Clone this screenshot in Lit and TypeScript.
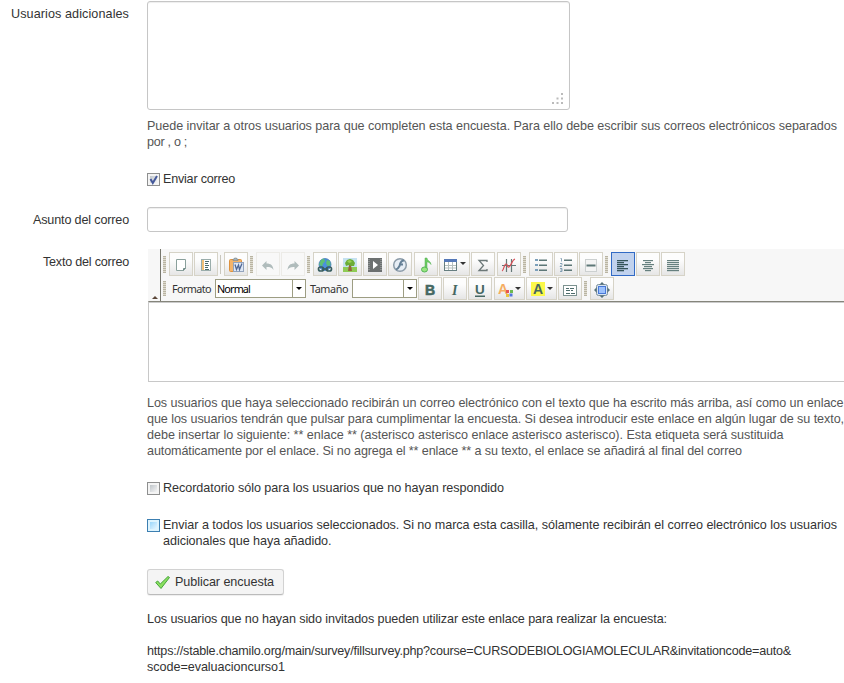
import { LitElement, html, svg, css, TemplateResult } from "lit";
import { customElement, property } from "lit/decorators.js";

const bars = (rows: number[][], color = "#4d6b6b", height = 1) =>
  rows.map(([x, y, w]) => svg`<rect x=${x} y=${y} width=${w} height=${height} fill=${color} />`);

const icons: Record<string, TemplateResult> = {
  page: svg`<path d="M3.500 2.500h9v9l-2 2h-7z" fill="#fff" stroke="#8aa09c"/><path d="M12.500 11.500h-2v2" fill="none" stroke="#6d8985"/>`,
  template: svg`<rect x="3.500" y="2.500" width="9" height="11" fill="#fff" stroke="#9aadab"/><path d="M5 3v10" stroke="#f2c078" stroke-width="2"/>${bars([[7, 4, 4], [7, 6, 3], [7, 8, 4], [7, 10, 3], [7, 12, 4]])}`,
  word: svg`<rect x="1.500" y="2.500" width="12" height="12" rx="1" fill="#f4b46a" stroke="#dd923f"/><path d="M5 3.500V2h1.500V1h2v1H10v1.500z" fill="#a9b6bd" stroke="#76858c" stroke-width=".6"/><rect x="5.500" y="5.500" width="10" height="9" fill="#dfe8f5" stroke="#93a4bd"/><path d="M7 7.500l1.500 5 2-4.500 1 4.500 2.500-6" fill="none" stroke="#4f6795" stroke-width="1.300"/>`,
  undo: svg`<path d="M2 8.500L6.500 4v2.500c4.500 0 6.500 2 7 6.500-1.500-2.200-3-3-7-3V13z" fill="#b0bcbc"/>`,
  redo: svg`<path d="M14 8.500L9.500 4v2.500c-4.500 0-6.500 2-7 6.500 1.500-2.200 3-3 7-3V13z" fill="#b0bcbc"/>`,
  link: svg`<circle cx="8" cy="7.500" r="6" fill="#4b90dc" stroke="#3973af" stroke-width=".7"/><path d="M4 3l3-1.500 1 3-2 2-1 3-3-2zM10 3l3 1 .5 4-3 1-1.500-3z" fill="#5fc073"/><g fill="none" stroke="#395e60" stroke-width="1.700"><rect x="1.500" y="10" width="5" height="4" rx="2"/><rect x="9.500" y="10" width="5" height="4" rx="2"/><path d="M5 12h6"/></g>`,
  image: svg`<rect x="1" y="1" width="14" height="9" fill="#c5e2f1"/><rect x="1" y="10" width="14" height="5" fill="#8fcb55"/><path d="M7 8h2l1 6H6z" fill="#94653a"/><path d="M3 6l2-3 3-1 3 1 2 3-1 3H9L7 8 4 9z" fill="#6bad35"/><path d="M5 4l3-1 2 2-3 1z" fill="#9ad153"/>`,
  video: svg`<rect x="1" y="1" width="14" height="14" fill="#6c7070"/><path d="M2 2v12M14 2v12" stroke="#aeb3b3" stroke-dasharray="1 1"/><path d="M6 4l5 4-5 4z" fill="#fff"/>`,
  flash: svg`<circle cx="8" cy="8" r="6.300" fill="#e6edf5" stroke="#8b9ba8" stroke-width="1.500"/><path d="M12 3.500C8 3.500 8 8 7.500 9S6 12 4 12.500M7 7.500h4" fill="none" stroke="#647f96" stroke-width="2"/>`,
  audio: svg`<path d="M7 1h2c0 3 4 3 4 6.500-1-2-3-2.500-4-2.500v7H7z" fill="#6ccc62" stroke="#55ae55" stroke-width=".5"/><ellipse cx="6.500" cy="12.500" rx="3" ry="2.500" fill="#98e580" stroke="#55b457"/>`,
  table: svg`<rect x="1.500" y="2.500" width="12" height="11" fill="#fff" stroke="#667e80"/><rect x="1" y="2" width="13" height="3" fill="#5478b8"/><path d="M2 8.500h11M2 11h11M5.500 5v8M9.500 5v8" stroke="#b5bfbe"/>`,
  sigma: svg`<path d="M12 5V3.500H4L8.500 8.500 4 13.500h8V12" fill="none" stroke="#6c7878" stroke-width="1.300"/>`,
  plot: svg`<path d="M1 8.500h14M5.500 2v13M10.500 2v13" stroke="#657878" stroke-width="1.200"/><path d="M1 14c2-1 2-7 4-7s1 4 3 3 3-7 6-8" fill="none" stroke="#d94d55" stroke-width="1.200"/>`,
  bullets: svg`<g fill="#7b9fba"><rect x="2" y="2" width="3" height="2"/><rect x="2" y="7" width="3" height="2"/><rect x="2" y="12" width="3" height="2"/></g>${bars([[6, 2.5, 8], [6, 7.5, 8], [6, 12.5, 8]], "#5d7777", 1.5)}`,
  numbers: svg`<path d="M2.500 1.500h1v3M2 6.500h2v1l-2 2h2M2 11.500h2v3H2M2.500 13h1.500" fill="none" stroke="#6f91a8" stroke-width=".8"/>${bars([[6, 2.5, 8], [6, 7.5, 8], [6, 12.5, 8]], "#5d7777", 1.5)}`,
  rule: svg`<rect x="2.500" y="2.500" width="11" height="12" fill="#f4f4f4" stroke="#ccd0d0"/><path d="M3.500 8.500h9" stroke="#5d7777" stroke-width="2"/>`,
  left: svg`${bars([[2, 3, 11], [2, 5, 7], [2, 7, 11], [2, 9, 7], [2, 11, 11], [2, 13, 7]], "#35545b", 1.3)}`,
  center: svg`${bars([[3, 3, 10], [5, 5, 6], [2, 7, 12], [4, 9, 8], [3, 11, 10], [5, 13, 6]], "#66807f", 1.2)}`,
  justify: svg`${bars([[2, 3, 12], [2, 5, 12], [2, 7, 12], [2, 9, 12], [2, 11, 12], [2, 13, 12]], "#66807f", 1.2)}`,
  color: svg`<text x="0" y="12" font-size="14" font-weight="700" fill="#f5ad62">A</text><rect x="8" y="8" width="3" height="3" fill="#e65454"/><rect x="12" y="8" width="3" height="3" fill="#6cb94f"/><rect x="8" y="12" width="3" height="3" fill="#e9c43d"/><rect x="11.500" y="11.500" width="3" height="3" fill="#5276dc"/>`,
  highlight: svg`<rect x="1" y="0" width="14" height="14" fill="#fbf84a"/><text x="3" y="12" font-size="14" font-weight="700" fill="#47685d">A</text>`,
  form: svg`<rect x="1.500" y="3.500" width="13" height="10" fill="#fff" stroke="#7c9290"/>${bars([[4, 6, 3], [8, 6, 4], [4, 8, 4], [9, 8, 2], [4, 11, 4], [9, 11, 4]])}`,
  fit: svg`<rect x="2.500" y="2.500" width="11" height="11" rx="2" fill="#d8e5f3" stroke="#7b8f9b"/><rect x="4.500" y="4.500" width="7" height="7" fill="#9cc1fc" stroke="#4778d7"/><path d="M8 0l2.500 2.500h-5zM8 16l2.500-2.500h-5zM0 8l2.500-2.500v5zM16 8l-2.500-2.500v5z" fill="#55707a"/>`,
  bold: svg`<text x="3" y="13" font-size="14" font-weight="700" fill="#456762" stroke="#456762" stroke-width=".6">B</text>`,
  italic: svg`<text x="5" y="13" font-size="14" font-weight="700" font-style="italic" font-family="Liberation Serif, serif" fill="#456762">I</text>`,
  underline: svg`<text x="3" y="12" font-size="13.500" font-weight="700" fill="#456762">U</text><rect x="3" y="13.500" width="10" height="1.500" fill="#456762"/>`,
};

const pen = document.createElement("canvas").getContext("2d")!;

/** A line of text whose tracking is computed so that it fills the given width. */
function line(text: string, width: number, font = '12.600px "Liberation Sans"') {
  pen.font = font;
  const tracking = (width - pen.measureText(text).width) / text.length;
  return html`<span class="line" style="letter-spacing:${tracking.toFixed(4)}px">${text}</span>`;
}
const ui = '10.800px "Noto Sans"';

@customElement("tool-button")
export class ToolButton extends LitElement {
  @property() icon = "";
  @property({ type: Boolean, reflect: true }) menu = false;
  static styles = css`
    :host { box-sizing: border-box; display: flex; flex: none; align-items: center; justify-content: center; width: 24px; height: 24px; border: 1px solid #d6d3c7; background: linear-gradient(#fdfdfd 30%, #e6e6e6); }
    :host([menu]) { width: 31px; gap: 1px; }
    :host([active]) { border-color: #316ac5; background: #c1d2ee; }
    :host([faded]) { border-color: #ecebe7; background: #f8f8f8; }
    :host([short]) { height: 23px; }
    svg { display: block; margin-top: 2px; font-family: "Liberation Sans", sans-serif; }
    .arrow { border: 3px solid transparent; border-top-color: #333; border-bottom: 0; margin-bottom: 1px; }
  `;
  render() {
    return html`<svg width="16" height="16" viewBox="0 0 16 16">${icons[this.icon]}</svg>${this.menu ? html`<i class="arrow"></i>` : ""}`;
  }
}

@customElement("app-root")
export class AppRoot extends LitElement {
  static styles = css`
    :host { display: block; width: 844px; height: 683px; overflow: hidden; background: #fff; color: #333; font: 12.6px/16px "Liberation Sans", Arial, sans-serif; }
    * { box-sizing: border-box; }
    .line { display: block; white-space: nowrap; }
    .row { display: grid; grid-template-columns: 129px 697px; column-gap: 18px; }
    .label { display: flex; justify-content: flex-end; }
    .area { display: flex; align-items: flex-end; justify-content: flex-end; width: 423px; height: 109px; margin-top: 1px; padding: 5px 5px 4px; border: 1px solid #c6c6c6; border-radius: 3px; box-shadow: inset 0 1px 1px #eee; }
    .usuarios { padding-top: 6px; }
    .help { color: #555; }
    .first { margin-top: 8px; }
    .check { display: grid; grid-template-columns: 13px 1fr; column-gap: 3px; }
    .box { display: block; width: 13px; height: 13px; margin-top: 2px; border: 1px solid #8e8f8f; background: linear-gradient(135deg, #bfc5ca, #f5f5f5) content-box, #f4f4f4; padding: 2px; }
    .box svg { display: block; margin: -3px; }
    .blue { border-color: #3c7fb1; background: linear-gradient(135deg, #9bd7fb, #e7f6ff) content-box, #def4fe; }
    .send { margin-top: 21px; }
    .subject { margin-top: 20px; }
    .subject .label { padding-top: 5px; }
    .input { width: 421px; height: 25px; border: 1px solid #c6c6c6; border-radius: 3px; box-shadow: inset 0 1px 1px #eee; }
    .message { margin-top: 17px; }
    .message .label { padding-top: 5px; }
    .editor { height: 133px; padding-left: 1px; }
    .tools { display: flex; height: 52px; background: #f7f7f7; }
    .collapse { flex: none; display: flex; align-items: flex-end; width: 13px; border-right: 1px solid #77776d; padding: 0 0 2px 4px; }
    .collapse i { border: 3px solid transparent; border-bottom-color: #5b4638; border-top: 0; }
    .bars { padding: 3px 0 0 2px; }
    .bar { display: flex; height: 25px; }
    .grip { flex: none; width: 3px; height: 17px; margin-top: 4px; background: repeating-linear-gradient(#b9b4a2 0 1px, #dedbd0 1px 2px); }
    .grip.low { height: 15px; }
    .grip.end { margin-left: 2px; margin-right: 3px; }
    .sep { flex: none; width: 1px; height: 19px; margin: 3px 3px 0 2px; background: #c9c7bd; }
    .g1 { margin-left: 1px; }
    .g2 { margin-left: 2px; }
    .g3 { margin-left: 3px; }
    .caption { flex: none; width: 39px; margin: 4px 0 0 6px; font: 10.8px/16px "Noto Sans", sans-serif; }
    .caption.near { margin-left: 4px; width: 38px; }
    .select { flex: none; display: flex; justify-content: space-between; height: 19px; margin-top: 2px; border: 1px solid #9d9d83; background: #fff; padding-left: 1px; font: 10.8px/18px "Noto Sans", sans-serif; color: #000; }
    .format { width: 91px; margin-left: 4px; }
    .size { width: 65px; margin-left: 4px; }
    .drop { display: flex; align-items: center; justify-content: center; width: 13px; border-left: 1px solid #9d9d83; }
    .drop i { border: 3px solid transparent; border-top-color: #000; border-bottom: 0; }
    .canvas { height: 81px; border: 1px solid #c8c8c8; border-width: 1px 0 1px 1px; border-top-color: #85857b; box-shadow: inset 0 1px #cbcbcb; }
    .body { margin-top: 13px; }
    .remind { margin-top: 21px; }
    .all { margin-top: 21px; }
    .publish { display: flex; align-items: center; gap: 5px; width: 137px; height: 26px; margin-top: 20px; padding: 0 0 0 7px; border: 1px solid #d2d2d2; border-bottom-color: #bbb; border-radius: 3px; background: #f4f4f4; color: #333; font: inherit; box-shadow: 0 1px 1px #eee; }
    .note { margin-top: 16px; }
    .url { margin-top: 16px; }
  `;

  render() {
    const t = (icon: string, gap = "g1") => html`<tool-button class=${gap} icon=${icon}></tool-button>`;
    const s = (icon: string, gap = "g1") => html`<tool-button short class=${gap} icon=${icon}></tool-button>`;
    return html`
      <div class="row">
        <div class="label usuarios">${line("Usuarios adicionales", 118)}</div>
        <div>
          <div class="area"><svg width="13" height="13" fill="#bbb"><path d="M10 1h2v2h-2zM5.500 5.500h2v2h-2zM10 5.500h2v2h-2zM1 10h2v2H1zM5.500 10h2v2h-2zM10 10h2v2h-2z"/></svg></div>
          <div class="help first">
            ${line("Puede invitar a otros usuarios para que completen esta encuesta. Para ello debe escribir sus correos electrónicos separados", 690)}
            ${line("por , o ;", 40)}
          </div>
          <div class="check send"><span class="box"><svg width="13" height="13"><path d="M3.500 6l2.300 4L10 3" fill="none" stroke="#45599b" stroke-width="2"/></svg></span>${line("Enviar correo", 72)}</div>
        </div>
      </div>
      <div class="row subject"><div class="label">${line("Asunto del correo", 96)}</div><div class="input"></div></div>
      <div class="row message">
        <div class="label">${line("Texto del correo", 86)}</div>
        <div>
          <div class="editor">
            <div class="tools">
              <div class="collapse"><i></i></div>
              <div class="bars">
                <div class="bar">
                  <i class="grip"></i>${t("page", "g3")}${t("template")}<i class="sep"></i>${t("word", "")}
                  <i class="grip end"></i><tool-button faded icon="undo"></tool-button><tool-button faded class="g1" icon="redo"></tool-button>
                  <i class="grip end"></i>${t("link", "")}${t("image")}${t("video")}${t("flash")}${t("audio", "g2")}
                  <tool-button menu class="g1" icon="table"></tool-button>${t("sigma")}${t("plot", "g2")}
                  <i class="grip end"></i>${t("bullets", "")}${t("numbers")}${t("rule")}
                  <i class="grip end"></i><tool-button active icon="left"></tool-button>${t("center")}${t("justify")}
                </div>
                <div class="bar">
                  <i class="grip low"></i><span class="caption">${line("Formato", 39, ui)}</span>
                  <div class="select format">${line("Normal", 33, ui)}<span class="drop"><i></i></span></div>
                  <span class="caption near">${line("Tamaño", 38, ui)}</span>
                  <div class="select size"><span></span><span class="drop"><i></i></span></div>
                  ${s("bold")}${s("italic")}${s("underline")}
                  <tool-button short menu class="g2" icon="color"></tool-button><tool-button short menu class="g1" icon="highlight"></tool-button>${s("form")}
                  <i class="grip low end"></i>${s("fit", "")}
                </div>
              </div>
            </div>
            <div class="canvas"></div>
          </div>
          <div class="help body">
            ${line("Los usuarios que haya seleccionado recibirán un correo electrónico con el texto que ha escrito más arriba, así como un enlace", 696.5)}
            ${line("que los usuarios tendrán que pulsar para cumplimentar la encuesta. Si desea introducir este enlace en algún lugar de su texto,", 697)}
            ${line("debe insertar lo siguiente: ** enlace ** (asterisco asterisco enlace asterisco asterisco). Esta etiqueta será sustituida", 636.5)}
            ${line("automáticamente por el enlace. Si no agrega el ** enlace ** a su texto, el enlace se añadirá al final del correo", 595)}
          </div>
          <div class="check remind"><span class="box"></span>${line("Recordatorio sólo para los usuarios que no hayan respondido", 341)}</div>
          <div class="check all"><span class="box blue"></span><div>
            ${line("Enviar a todos los usuarios seleccionados. Si no marca esta casilla, sólamente recibirán el correo electrónico los usuarios", 674)}
            ${line("adicionales que haya añadido.", 168.5)}
          </div></div>
          <button class="publish"><svg width="15" height="16" viewBox="0 0 15 16"><path d="M.7 8.500l2-1.500 2.600 3L13 2.500l1.500 1L6 14.500z" fill="#8be05f" stroke="#46a43c"/></svg>${line("Publicar encuesta", 99)}</button>
          <div class="note">${line("Los usuarios que no hayan sido invitados pueden utilizar este enlace para realizar la encuesta:", 520)}</div>
          <div class="url">
            ${line("https://stable.chamilo.org/main/survey/fillsurvey.php?course=CURSODEBIOLOGIAMOLECULAR&invitationcode=auto&", 644)}
            ${line("scode=evaluacioncurso1", 138)}
          </div>
        </div>
      </div>
    `;
  }
}
